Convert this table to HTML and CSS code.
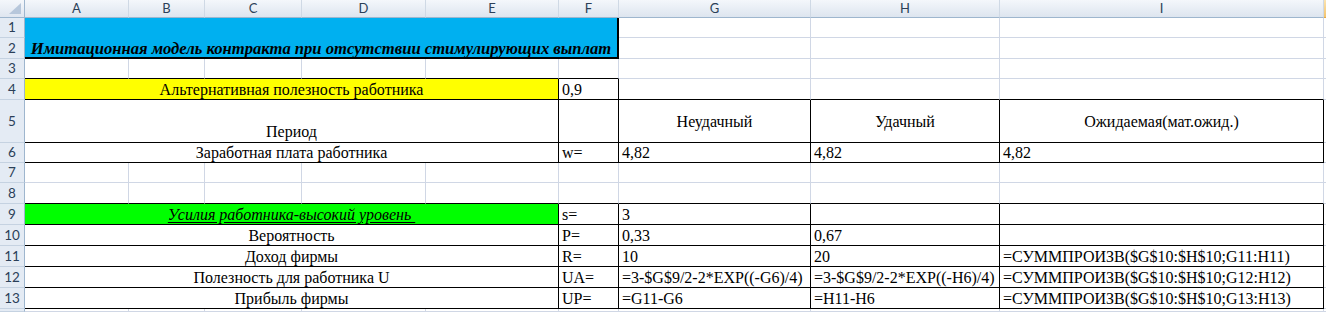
FILE: index.html
```html
<!DOCTYPE html>
<html lang="ru">
<head>
<meta charset="utf-8">
<title>Имитационная модель контракта</title>
<link rel="stylesheet" href="styles.css">
</head>
<body>
<div class="sheet">
  <!-- column headers -->
  <div class="corner"><svg width="24" height="17" viewBox="0 0 24 17"><polygon points="9,14 21,14 21,3" fill="#b7c7db"/></svg></div>
  <div class="ch">A</div><div class="ch">B</div><div class="ch">C</div><div class="ch">D</div><div class="ch">E</div><div class="ch">F</div><div class="ch">G</div><div class="ch">H</div><div class="ch">I</div><div class="ch sel"></div>

  <!-- row 1 -->
  <div class="rh">1</div>
  <div class="title">Имитационная модель контракта при отсутствии стимулирующих выплат</div>
  <div></div><div></div><div></div><div class="j"></div>

  <!-- row 2 -->
  <div class="rh">2</div>
  <div></div><div></div><div></div><div class="j"></div>

  <!-- row 3 -->
  <div class="rh">3</div>
  <div class="bb"></div><div class="bb"></div><div class="bb"></div><div class="bb"></div><div class="bb"></div><div class="bb"></div>
  <div></div><div></div><div></div><div class="j"></div>

  <!-- row 4 -->
  <div class="rh">4</div>
  <div class="span5 yellow br bb c">Альтернативная полезность работника</div>
  <div class="br bb">0,9</div>
  <div class="bb"></div><div class="bb"></div><div class="bb"></div><div class="j"></div>

  <!-- row 5 -->
  <div class="rh">5</div>
  <div class="span5 br bb c low">Период</div>
  <div class="br bb"></div>
  <div class="br bb c m">Неудачный</div>
  <div class="br bb c m">Удачный</div>
  <div class="br bb c m">Ожидаемая(мат.ожид.)</div>
  <div class="j"></div>

  <!-- row 6 -->
  <div class="rh">6</div>
  <div class="span5 br bb c">Заработная плата работника</div>
  <div class="br bb">w=</div>
  <div class="br bb">4,82</div>
  <div class="br bb">4,82</div>
  <div class="br bb">4,82</div>
  <div class="j"></div>

  <!-- row 7 -->
  <div class="rh">7</div>
  <div></div><div></div><div></div><div></div><div></div><div></div><div></div><div></div><div></div><div class="j"></div>

  <!-- row 8 -->
  <div class="rh">8</div>
  <div class="bb"></div><div class="bb"></div><div class="bb"></div><div class="bb"></div><div class="bb"></div><div class="bb"></div><div class="bb"></div><div class="bb"></div><div class="bb"></div><div class="j"></div>

  <!-- row 9 -->
  <div class="rh">9</div>
  <div class="span5 green br bb c"><span class="effort">Усилия работника-высокий уровень&nbsp;</span></div>
  <div class="br bb">s=</div>
  <div class="br bb">3</div>
  <div class="br bb"></div>
  <div class="br bb"></div>
  <div class="j"></div>

  <!-- row 10 -->
  <div class="rh">10</div>
  <div class="span5 br bb c">Вероятность</div>
  <div class="br bb">P=</div>
  <div class="br bb">0,33</div>
  <div class="br bb">0,67</div>
  <div class="br bb"></div>
  <div class="j"></div>

  <!-- row 11 -->
  <div class="rh">11</div>
  <div class="span5 br bb c">Доход фирмы</div>
  <div class="br bb">R=</div>
  <div class="br bb">10</div>
  <div class="br bb">20</div>
  <div class="br bb">=СУММПРОИЗВ($G$10:$H$10;G11:H11)</div>
  <div class="j"></div>

  <!-- row 12 -->
  <div class="rh">12</div>
  <div class="span5 br bb c">Полезность для работника U</div>
  <div class="br bb">UA=</div>
  <div class="br bb">=3-$G$9/2-2*EXP((-G6)/4)</div>
  <div class="br bb">=3-$G$9/2-2*EXP((-H6)/4)</div>
  <div class="br bb">=СУММПРОИЗВ($G$10:$H$10;G12:H12)</div>
  <div class="j"></div>

  <!-- row 13 -->
  <div class="rh">13</div>
  <div class="span5 br bb c">Прибыль фирмы</div>
  <div class="br bb">UP=</div>
  <div class="br bb">=G11-G6</div>
  <div class="br bb">=H11-H6</div>
  <div class="br bb">=СУММПРОИЗВ($G$10:$H$10;G13:H13)</div>
  <div class="j"></div>

  <!-- row 14 (cut off) -->
  <div class="rh"></div>
  <div></div><div></div><div></div><div></div><div></div><div></div><div></div><div></div><div></div><div class="j"></div>
</div>
</body>
</html>
```

FILE: styles.css
```css
html, body {
  margin: 0;
  padding: 0;
  background: #ffffff;
  overflow: hidden;
}

.sheet {
  display: grid;
  grid-template-columns: 25px 104px 76px 97px 124px 133px 60px 192px 189px 324px 2px;
  grid-template-rows: 18px 20px 21px 20px 21px 43px 20px 20px 21px 21px 21px 21px 21px 21px 3px;
  width: 1326px;
  height: 312px;
  overflow: hidden;
  font-family: "Liberation Serif", Tinos, "Times New Roman", "DejaVu Serif", serif;
  font-size: 16px;
  line-height: 17px;
  color: #000000;
}

.sheet > div {
  box-sizing: border-box;
  border-right: 1px solid #d0d7e5;
  border-bottom: 1px solid #d0d7e5;
  display: flex;
  align-items: flex-end;
  padding: 0 3px 1px;
  white-space: nowrap;
  min-width: 0;
  overflow: visible;
}

.sheet > .corner {
  padding: 0;
  background: linear-gradient(#f4f7fb, #dfe6f0);
  border-right: 1px solid #9eb6ce;
  border-bottom: 1px solid #9eb6ce;
  align-items: stretch;
}

.sheet > .ch {
  padding: 0;
  justify-content: center;
  align-items: center;
  background: linear-gradient(#f4f7fb, #dde5ef);
  border-right: 1px solid #cfd9e5;
  border-bottom: 1px solid #9eb6ce;
  font-family: Lato, "Noto Sans", sans-serif;
  font-size: 13px;
  color: #2b3f58;
}

.sheet > .ch.sel {
  background: linear-gradient(#fbe3b0, #f3c46f);
  border-right: none;
  border-bottom-color: #e2a84a;
}

.sheet > .rh {
  padding: 0;
  justify-content: center;
  align-items: center;
  background: #e4ebf4;
  border-right: 1px solid #9eb6ce;
  border-bottom: 1px solid #c5d2e1;
  font-family: Lato, "Noto Sans", sans-serif;
  font-size: 13.5px;
  color: #2b3f58;
}

.sheet > .j {
  border-right: none;
  padding: 0;
}

.sheet > .title {
  grid-column: span 6;
  grid-row: span 2;
  background: #00b0f0;
  border-right: 2px solid #000000;
  border-bottom: 2px solid #000000;
  justify-content: center;
  padding: 0;
  font-size: 16.6px;
  font-weight: bold;
  font-style: italic;
}

.sheet > .span5 {
  grid-column: span 5;
}

.sheet > .bb {
  border-bottom-color: #000000;
}

.sheet > .br {
  border-right-color: #000000;
}

.sheet > .c {
  justify-content: center;
}

.sheet > .m {
  align-items: center;
  padding-bottom: 0;
}

.sheet > .low {
  padding-bottom: 2px;
}

.yellow {
  background: #ffff00;
}

.green {
  background: #00ff00;
}

.effort {
  font-style: italic;
  text-decoration: underline;
  text-underline-offset: 2px;
}
```
